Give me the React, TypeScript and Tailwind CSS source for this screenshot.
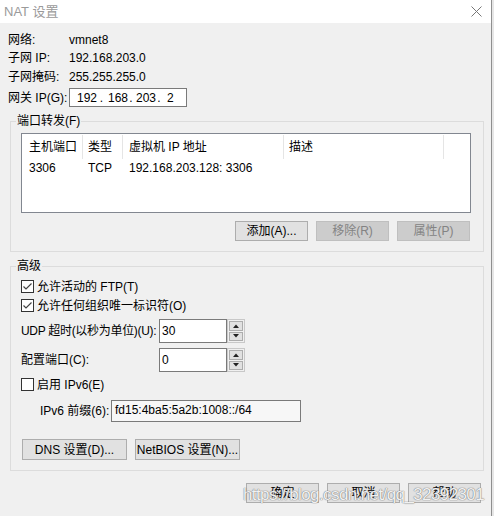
import type { ReactNode } from 'react';

function Btn({
  children,
  disabled,
  wide,
}: {
  children: ReactNode;
  disabled?: boolean;
  wide?: boolean;
}) {
  return (
    <div
      className={
        (wide ? 'w-[105px] h-[21px] ' : 'w-[73px] h-[20px] ') +
        (disabled
          ? 'border border-[#bfbfbf] bg-[#cccccc] text-[#838383] '
          : 'border border-[#adadad] bg-[#e1e1e1] text-black ') +
        'flex items-center justify-center text-[12px] leading-[12px] whitespace-nowrap'
      }
    >
      {children}
    </div>
  );
}

function Check({ checked }: { checked?: boolean }) {
  return (
    <div className="w-[13px] h-[13px] border border-[#333333] bg-white flex items-center justify-center shrink-0">
      {checked && (
        <svg width="11" height="11" viewBox="0 0 11 11">
          <path d="M1.5 5.5 L4 8 L9.5 2.5" fill="none" stroke="#444" strokeWidth="1.2" />
        </svg>
      )}
    </div>
  );
}

function Spin({ value }: { value: string }) {
  return (
    <div className="flex h-[24px]">
      <div className="w-[68px] h-full border border-[#7a7a7a] bg-white flex items-center px-[2px] text-[12px]">
        {value}
      </div>
      <div className="w-[18px] h-full border border-[#c8c8c8] bg-[#f0f0f0] flex flex-col gap-[1px] p-[1px]">
        <div className="flex-1 border border-[#adadad] bg-[#e1e1e1] flex items-center justify-center">
          <svg width="6" height="4" viewBox="0 0 6 4">
            <polygon points="0,4 3,0.5 6,4" fill="#222" />
          </svg>
        </div>
        <div className="flex-1 border border-[#adadad] bg-[#e1e1e1] flex items-center justify-center">
          <svg width="6" height="4" viewBox="0 0 6 4">
            <polygon points="0,0 3,3.5 6,0" fill="#222" />
          </svg>
        </div>
      </div>
    </div>
  );
}

const cols = [
  { w: 'w-[61px] pl-[7px]', h: '主机端口', v: '3306' },
  { w: 'w-[40px] pl-[5px]', h: '类型', v: 'TCP' },
  { w: 'w-[161px] pl-[6px]', h: '虚拟机 IP 地址', v: '192.168.203.128: 3306' },
  { w: 'w-[160px] pl-[5px]', h: '描述', v: '' },
];

export default function App() {
  return (
    <div className="w-[494px] h-[516px] flex bg-[#f0f0f0] text-black text-[12px] leading-[14px] [font-family:'Liberation_Sans','Noto_Sans_CJK_SC',sans-serif]">
      <div className="w-[491px] flex flex-col relative overflow-hidden">
        <div className="h-[23px] shrink-0 bg-white flex items-center justify-between pl-[4px] pr-[9px]">
          <span className="text-[13px] text-[#9a9a9a]">NAT 设置</span>
          <svg width="11" height="11" viewBox="0 0 11 11">
            <path d="M0.5 0.5 L10.5 10.5 M10.5 0.5 L0.5 10.5" stroke="#777" strokeWidth="1" />
          </svg>
        </div>

        <div className="flex-1 flex flex-col">
          <div className="pl-[8px] pt-[8px] flex flex-col">
            <div className="flex h-[18px] items-center">
              <span className="w-[61px]">网络:</span>
              <span>vmnet8</span>
            </div>
            <div className="flex h-[18px] items-center">
              <span className="w-[61px]">子网 IP:</span>
              <span>192.168.203.0</span>
            </div>
            <div className="flex h-[19px] items-center">
              <span className="w-[61px]">子网掩码:</span>
              <span>255.255.255.0</span>
            </div>
            <div className="flex h-[19px] items-center mt-[2px]">
              <span className="w-[61px] whitespace-nowrap">网关 IP(G):</span>
              <div className="w-[118px] h-full border border-[#7a7a7a] bg-white flex items-center pl-[7px]">
                <span className="w-[18px]">192</span>
                <span className="w-[13px] text-center">.</span>
                <span className="w-[18px]">168</span>
                <span className="w-[10px] text-center">.</span>
                <span className="w-[18px]">203</span>
                <span className="w-[10px] text-center">.</span>
                <span className="pl-[3px]">2</span>
              </div>
            </div>
          </div>

          <fieldset className="ml-[10px] w-[474px] mt-[8px] border border-[#dcdcdc]">
            <legend className="ml-[5px] px-[1px] leading-[12px]">端口转发(F)</legend>
            <div className="pl-[10px] pt-[6px] pb-[10px]">
              <div className="w-[450px] h-[80px] border border-[#828790] bg-white flex flex-col">
                <div className="flex h-[25px] pt-[1px]">
                  {cols.map((c) => (
                    <div key={c.h} className={c.w + ' h-full border-r border-[#e5e5e5] flex items-center whitespace-nowrap'}>
                      {c.h}
                    </div>
                  ))}
                </div>
                <div className="flex h-[18px] items-center">
                  {cols.map((c) => (
                    <div key={c.h} className={c.w + ' whitespace-nowrap'}>
                      {c.v}
                    </div>
                  ))}
                </div>
              </div>
              <div className="w-[450px] flex justify-end gap-[8px] mt-[8px] pr-[1px]">
                <Btn>添加(A)...</Btn>
                <Btn disabled>移除(R)</Btn>
                <Btn disabled>属性(P)</Btn>
              </div>
            </div>
          </fieldset>

          <fieldset className="ml-[10px] w-[474px] mt-[8px] border border-[#dcdcdc]">
            <legend className="ml-[5px] px-[1px] leading-[12px]">高级</legend>
            <div className="pl-[10px] pt-[5px] pb-[10px] flex flex-col">
              <div className="flex h-[19px] items-center gap-[3px]">
                <Check checked />
                <span>允许活动的 FTP(T)</span>
              </div>
              <div className="flex h-[19px] items-center gap-[3px]">
                <Check checked />
                <span>允许任何组织唯一标识符(O)</span>
              </div>
              <div className="flex items-center mt-[4px]">
                <span className="w-[138px] whitespace-nowrap tracking-[-0.3px]">UDP 超时(以秒为单位)(U):</span>
                <Spin value="30" />
              </div>
              <div className="flex items-center mt-[5px]">
                <span className="w-[138px] whitespace-nowrap">配置端口(C):</span>
                <Spin value="0" />
              </div>
              <div className="flex h-[19px] items-center gap-[3px] mt-[3px]">
                <Check />
                <span>启用 IPv6(E)</span>
              </div>
              <div className="flex items-center mt-[6px] pl-[19px]">
                <span className="w-[71px] whitespace-nowrap">IPv6 前缀(6):</span>
                <div className="w-[190px] h-[22px] border border-[#7a7a7a] bg-[#f7f7f7] flex items-center pl-[3px] pb-[2px]">
                  fd15:4ba5:5a2b:1008::/64
                </div>
              </div>
              <div className="flex gap-[8px] mt-[17px] ml-[1px]">
                <Btn wide>DNS 设置(D)...</Btn>
                <Btn wide>NetBIOS 设置(N)...</Btn>
              </div>
            </div>
          </fieldset>

          <div className="flex justify-end gap-[8px] mt-[12px] pr-[10px]">
            <Btn>确定</Btn>
            <Btn>取消</Btn>
            <Btn>帮助</Btn>
          </div>
        </div>

        <div className="absolute left-[243px] top-[484px] text-[17px] leading-[22px] tracking-[-0.6px] text-white/90 [font-family:'Liberation_Sans',sans-serif] [text-shadow:0_0_1px_#707070,0_0_1px_#707070] pointer-events-none whitespace-nowrap">
          https://blog.csdn.net/qq_32392301
        </div>
      </div>
      <div className="w-[3px] border-l border-[#8f8f8f] bg-[#e6e6e6]" />
    </div>
  );
}
